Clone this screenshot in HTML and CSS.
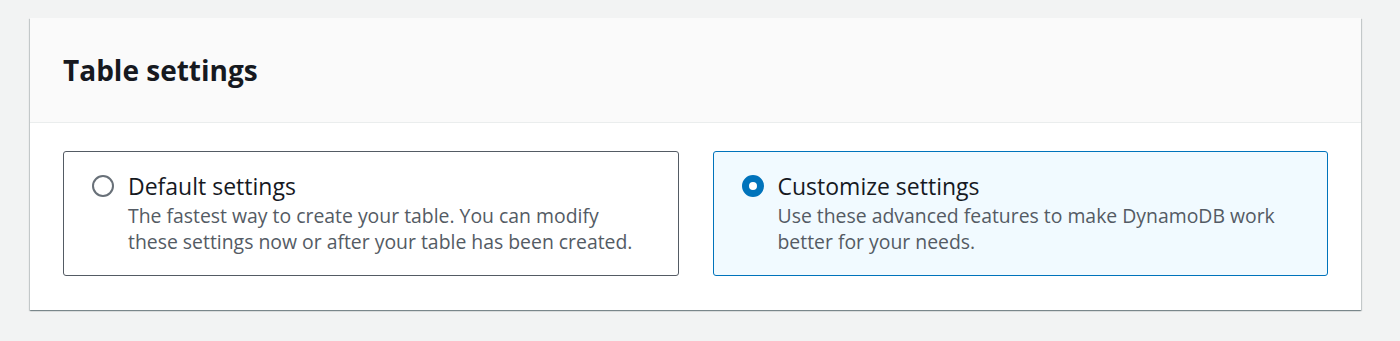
FILE: index.html
```html
<!DOCTYPE html>
<html lang="en">
<head>
    <meta charset="UTF-8">
    <title>Table settings</title>
    <link rel="stylesheet" href="styles.css">
</head>
<body>
    <div class="container">
        <div class="container-header">
            <h2>Table settings</h2>
        </div>
        <div class="container-body">
            <label class="tile">
                <span class="radio"></span>
                <span class="tile-text">
                    <span class="tile-label">Default settings</span>
                    <span class="tile-desc">The fastest way to create your table. You can modify these settings now or after your table has been created.</span>
                </span>
            </label>
            <label class="tile selected">
                <span class="radio"></span>
                <span class="tile-text">
                    <span class="tile-label">Customize settings</span>
                    <span class="tile-desc">Use these advanced features to make DynamoDB work better for your needs.</span>
                </span>
            </label>
        </div>
    </div>
</body>
</html>
```

FILE: styles.css
```css
body {
    margin: 0;
    padding: 18px 39px 30px 30px;
    background-color: #f2f3f3;
    font-family: "Open Sans", Arial, sans-serif;
    color: #16191f;
}
.container {
    background-color: #fff;
    box-shadow: 0 1px 1px 0 rgba(0, 28, 36, .3), 1px 1px 1px 0 rgba(0, 28, 36, .15), -1px 1px 1px 0 rgba(0, 28, 36, .15);
}
.container-header {
    background-color: #fafafa;
    border-bottom: 1px solid #eaeded;
    height: 104px;
    padding: 0 33px;
    display: flex;
    align-items: center;
}
.container-header h2 {
    margin: 0;
    font-size: 28px;
    font-weight: 700;
    color: #16191f;
}
.container-body {
    display: grid;
    grid-template-columns: 1fr 1fr;
    gap: 34px;
    padding: 28px 33px 34px;
}
.tile {
    display: flex;
    align-items: flex-start;
    gap: 14px;
    height: 125px;
    box-sizing: border-box;
    padding: 19px 36px 19px 28px;
    border: 1px solid #545b64;
    border-radius: 3px;
    cursor: pointer;
}
.tile.selected {
    border-color: #0073bb;
    background-color: #f1faff;
}
.radio {
    flex: none;
    width: 22px;
    height: 22px;
    margin-top: 4px;
    box-sizing: border-box;
    border: 2px solid #687078;
    border-radius: 50%;
    background-color: #fff;
}
.selected .radio {
    border: 7px solid #0073bb;
}
.tile-text {
    display: flex;
    flex-direction: column;
}
.tile-label {
    font-size: 23px;
    line-height: 30px;
    margin-bottom: 2px;
    color: #16191f;
}
.tile-desc {
    font-size: 19.4px;
    line-height: 26px;
    color: #545b64;
}
```
